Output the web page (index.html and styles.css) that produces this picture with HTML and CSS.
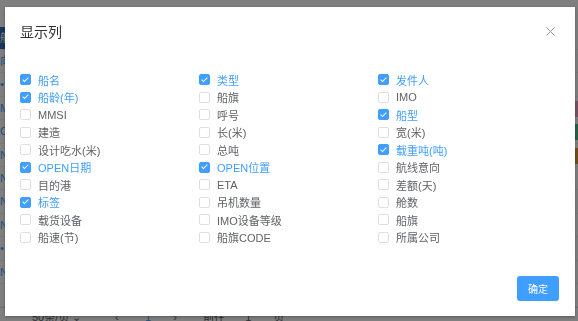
FILE: index.html
```html
<!DOCTYPE html>
<html lang="zh-CN">
<head>
    <meta charset="UTF-8">
    <title>显示列</title>
    <link rel="stylesheet" href="styles.css">
</head>
<body>
    <div class="page">
        <div class="table">
            <div class="row head"><span class="cell first">船</span><span class="cell"></span></div>
            <div class="row"><span class="cell first">向</span><span class="cell"></span></div>
            <div class="row"><span class="cell first">•</span><span class="cell"></span></div>
            <div class="row"><span class="cell first">M</span><span class="cell"><i class="tag pink">A</i></span></div>
            <div class="row"><span class="cell first">C</span><span class="cell"><i class="tag green">B</i></span></div>
            <div class="row"><span class="cell first">N</span><span class="cell"><i class="tag orange">Y</i></span></div>
            <div class="row"><span class="cell first">N</span><span class="cell"></span></div>
            <div class="row"><span class="cell first">N</span><span class="cell"></span></div>
            <div class="row"><span class="cell first">N</span><span class="cell"></span></div>
            <div class="row"><span class="cell first">•</span><span class="cell"></span></div>
            <div class="row"><span class="cell first">N</span><span class="cell"></span></div>
            <div class="row"><span class="cell first"></span><span class="cell"></span></div>
        </div>
        <div class="pager">
            <span class="sizes">50条/页 ⌄</span>
            <span class="arrow">‹</span>
            <span class="active">1</span>
            <span class="arrow">›</span>
            <span>前往</span>
            <span class="jump">1</span>
            <span>页</span>
        </div>
    </div>

    <div class="mask">
        <div class="dialog">
            <div class="dialog-header">
                <span class="dialog-title">显示列</span>
                <svg class="dialog-close" width="9" height="9" viewBox="0 0 9 9">
                    <path d="M0.5 0.5 L8.5 8.5 M8.5 0.5 L0.5 8.5" stroke="#909399" stroke-width="1" fill="none"/>
                </svg>
            </div>
            <div class="dialog-body">
                <label class="check on"><span class="box"></span>船名</label>
                <label class="check on"><span class="box"></span>类型</label>
                <label class="check on"><span class="box"></span>发件人</label>

                <label class="check on"><span class="box"></span>船龄(年)</label>
                <label class="check"><span class="box"></span>船旗</label>
                <label class="check"><span class="box"></span>IMO</label>

                <label class="check"><span class="box"></span>MMSI</label>
                <label class="check"><span class="box"></span>呼号</label>
                <label class="check on"><span class="box"></span>船型</label>

                <label class="check"><span class="box"></span>建造</label>
                <label class="check"><span class="box"></span>长(米)</label>
                <label class="check"><span class="box"></span>宽(米)</label>

                <label class="check"><span class="box"></span>设计吃水(米)</label>
                <label class="check"><span class="box"></span>总吨</label>
                <label class="check on"><span class="box"></span>载重吨(吨)</label>

                <label class="check on"><span class="box"></span>OPEN日期</label>
                <label class="check on"><span class="box"></span>OPEN位置</label>
                <label class="check"><span class="box"></span>航线意向</label>

                <label class="check"><span class="box"></span>目的港</label>
                <label class="check"><span class="box"></span>ETA</label>
                <label class="check"><span class="box"></span>差额(天)</label>

                <label class="check on"><span class="box"></span>标签</label>
                <label class="check"><span class="box"></span>吊机数量</label>
                <label class="check"><span class="box"></span>舱数</label>

                <label class="check"><span class="box"></span>载货设备</label>
                <label class="check"><span class="box"></span>IMO设备等级</label>
                <label class="check"><span class="box"></span>船旗</label>

                <label class="check"><span class="box"></span>船速(节)</label>
                <label class="check"><span class="box"></span>船旗CODE</label>
                <label class="check"><span class="box"></span>所属公司</label>
            </div>
            <div class="dialog-footer">
                <button class="btn-primary">确定</button>
            </div>
        </div>
    </div>
</body>
</html>
```

FILE: styles.css
```css
body {
    margin: 0;
    font-family: "Liberation Sans", "Noto Sans CJK SC", sans-serif;
    color: #606266;
    background: #fff;
    width: 578px;
    height: 321px;
    overflow: hidden;
}

/* page behind the mask */
.page {
    display: flex;
    flex-direction: column;
    height: 321px;
}
.table {
    flex: 1;
    padding-top: 27px;
}
.row {
    display: flex;
    justify-content: space-between;
    height: 22.4px;
    border-bottom: 1px solid #ebeef5;
    font-size: 11px;
    line-height: 22px;
    color: #409eff;
}
.row.head {
    height: 22px;
}
.row.head .first {
    background: #2f6db5;
    color: #fff;
}
.cell.first {
    width: 16px;
    white-space: nowrap;
}
.tag {
    display: inline-block;
    font-style: normal;
    width: 12px;
    height: 16px;
    line-height: 16px;
    font-size: 10px;
    color: #fff;
}
.tag.pink { background: #f0a0c8; }
.tag.green { background: #4fbf8f; }
.tag.orange { background: #e89a3c; color: #333; }
.pager {
    display: flex;
    gap: 22px;
    height: 18px;
    padding-left: 32px;
    font-size: 11px;
    line-height: 18px;
    color: #606266;
    border-top: 1px solid #dcdfe6;
}
.pager .sizes { width: 61px; }
.pager .arrow { width: 8px; }
.pager .jump { margin-left: -2px; }
.pager .active { color: #409eff; }

/* mask + dialog */
.mask {
    position: fixed;
    inset: 0;
    background: rgba(0, 0, 0, 0.5);
    padding: 7px 3px 5px 5px;
}
.dialog {
    width: 570px;
    height: 309px;
    background: #fff;
    box-sizing: border-box;
    padding: 16px 16px 15px 15px;
    display: flex;
    flex-direction: column;
    box-shadow: 0 1px 3px rgba(0, 0, 0, 0.3);
}
.dialog-header {
    display: flex;
    justify-content: space-between;
    align-items: center;
    height: 18px;
    line-height: 18px;
}
.dialog-title {
    font-size: 14px;
    color: #303133;
}
.dialog-close {
    margin-right: 4px;
    margin-top: -2px;
}
.dialog-body {
    display: grid;
    grid-template-columns: 179px 179px 1fr;
    grid-auto-rows: 17.5px;
    margin-top: 30px;
}
.check {
    display: flex;
    align-items: center;
    gap: 7px;
    font-size: 11px;
    color: #606266;
    white-space: nowrap;
}
.check.on {
    color: #409eff;
}
.box {
    position: relative;
    width: 11px;
    height: 11px;
    box-sizing: border-box;
    border: 1px solid #dcdfe6;
    border-radius: 2px;
    background: #fff;
}
.check.on .box {
    background: #409eff;
    border-color: #409eff;
}
.check.on .box::after {
    content: "";
    position: absolute;
    left: 3px;
    top: 0.5px;
    width: 2px;
    height: 5px;
    border: 1px solid #fff;
    border-left: 0;
    border-top: 0;
    transform: rotate(45deg);
}
.dialog-footer {
    display: flex;
    justify-content: flex-end;
    margin-top: auto;
}
.btn-primary {
    width: 42px;
    height: 25px;
    border: 0;
    border-radius: 3px;
    background: #409eff;
    color: #fff;
    font-family: "Liberation Sans", "Noto Sans CJK SC", sans-serif;
    font-size: 10px;
    padding: 0;
}
```
